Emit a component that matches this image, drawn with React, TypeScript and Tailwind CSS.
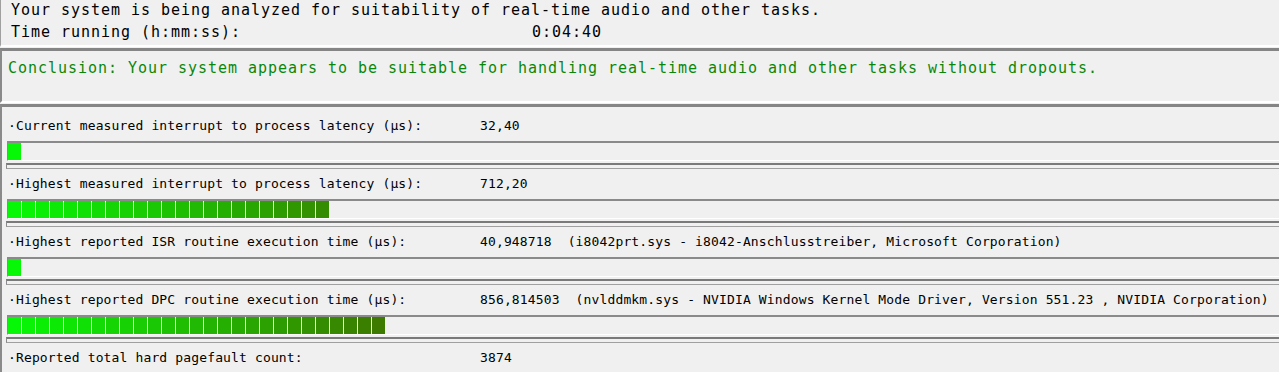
import React from "react";

const mono = { fontFamily: '"DejaVu Sans Mono", "Liberation Mono", monospace' };

type Row = { label: string; value: string; segs: number | null };

const rows: Row[] = [
  { label: "·Current measured interrupt to process latency (µs):", value: "32,40", segs: 1 },
  { label: "·Highest measured interrupt to process latency (µs):", value: "712,20", segs: 23 },
  {
    label: "·Highest reported ISR routine execution time (µs):",
    value: "40,948718  (i8042prt.sys - i8042-Anschlusstreiber, Microsoft Corporation)",
    segs: 1,
  },
  {
    label: "·Highest reported DPC routine execution time (µs):",
    value:
      "856,814503  (nvlddmkm.sys - NVIDIA Windows Kernel Mode Driver, Version 551.23 , NVIDIA Corporation)",
    segs: 27,
  },
  { label: "·Reported total hard pagefault count:", value: "3874", segs: null },
];

function segColor(i: number) {
  const t = Math.min(i / 26, 1);
  const r = Math.round(6 + (60 - 6) * t);
  const g = Math.round(248 + (122 - 248) * t);
  const b = Math.round(6 + (0 - 6) * t);
  return `rgb(${r},${g},${b})`;
}

function Bar({ segs }: { segs: number }) {
  return (
    <>
      <div className="ml-[5px] mt-px h-[20px] border-t-2 border-l border-b border-t-[#8a8a8a] border-l-[#8a8a8a] border-b-white">
        <div className="flex h-[17px] gap-px">
          {Array.from({ length: segs }).map((_, i) => (
            <div key={i} className="h-full w-[13px]" style={{ background: segColor(i) }} />
          ))}
        </div>
      </div>
      <div className="ml-[4px] mt-[2px] h-[6px] border-t-2 border-l border-b border-t-[#7a7a7a] border-l-[#8a8a8a] border-b-[#a0a0a0]" />
    </>
  );
}

export default function App() {
  return (
    <div className="w-[1279px] h-[372px] overflow-hidden bg-[#f0f0f0] text-black" style={mono}>
      {/* top panel */}
      <div className="h-[47px] border-l border-l-[#a0a0a0] border-b-2 border-b-white pl-[10px] text-[15px] tracking-[0.97px]">
        <div className="h-[20px] leading-[20px] whitespace-pre">
          Your system is being analyzed for suitability of real-time audio and other tasks.
        </div>
        <div className="mt-[2px] h-[20px] leading-[20px] flex whitespace-pre">
          <span className="w-[521px]">Time running (h:mm:ss):</span>
          <span>0:04:40</span>
        </div>
      </div>
      {/* conclusion */}
      <div className="mt-px h-[55px] border-t-[3px] border-t-[#858585] border-l-2 border-l-[#8a8a8a] border-b-2 border-b-white pl-[6px] text-[15px] tracking-[0.97px] text-[#0a870a]">
        <div className="mt-[7px] h-[20px] leading-[20px] whitespace-pre">
          Conclusion: Your system appears to be suitable for handling real-time audio and other tasks without dropouts.
        </div>
      </div>
      {/* lower panel */}
      <div className="mt-px h-[300px] border-t-[3px] border-t-[#858585] border-l-2 border-l-[#8a8a8a] pt-[4px] text-[13px] tracking-[0.14px]">
        {rows.map((r, idx) => (
          <div key={idx}>
            <div className="flex h-[29px] items-center whitespace-pre pl-[6px]">
              <span className="w-[472px] shrink-0">{r.label}</span>
              <span>{r.value}</span>
            </div>
            {r.segs !== null && <Bar segs={r.segs} />}
          </div>
        ))}
      </div>
    </div>
  );
}
